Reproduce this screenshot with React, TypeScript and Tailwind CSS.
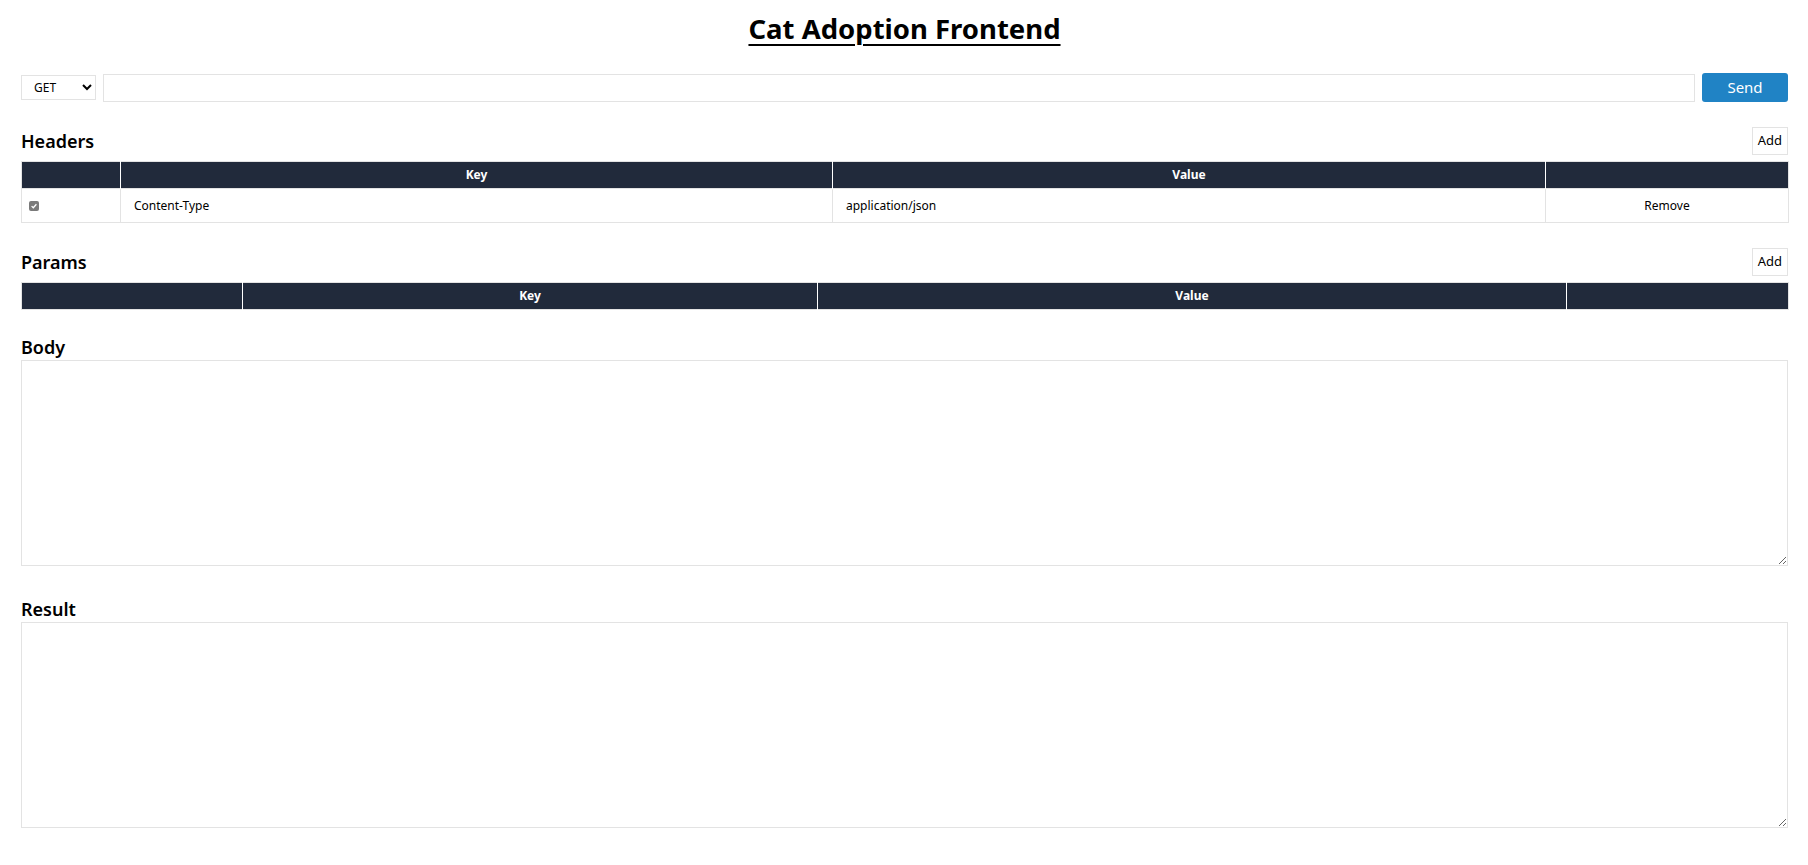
import { useState } from "react";

type Row = { enabled: boolean; key: string; value: string };

const font = "font-['Noto_Sans','Open_Sans',sans-serif]";

function CheckMark({ checked }: { checked: boolean }) {
   return (
      <span className={`inline-flex items-center justify-center w-[10px] h-[10px] rounded-[2px] align-middle ${checked ? "bg-[#7a7a7a]" : "border border-[#9a9a9a] bg-white"}`}>
         {checked && (
            <svg viewBox="0 0 10 10" className="w-[8px] h-[8px]">
               <path d="M2 5.2 L4.1 7.2 L8 2.8" fill="none" stroke="white" strokeWidth="1.6" />
            </svg>
         )}
      </span>
   );
}

function SectionHead({ title, onAdd }: { title: string; onAdd?: () => void }) {
   return (
      <div className="flex items-end justify-between">
         <h2 className="text-[18px] font-semibold leading-none text-black pb-[5px]">{title}</h2>
         {onAdd && (
            <button
               onClick={onAdd}
               className="h-[28px] px-[5px] border border-[#e3e3e3] bg-white text-[13px] text-black"
            >
               Add
            </button>
         )}
      </div>
   );
}

function KeyValueTable({ rows, widths }: { rows: Row[]; widths: string[] }) {
   return (
      <table className="w-full border-collapse table-fixed border border-[#e3e3e3] mt-[6px]">
         <colgroup>
            {widths.map((w, i) => (
               <col key={i} style={{ width: w }} />
            ))}
         </colgroup>
         <thead>
            <tr className="bg-[#212a3b] h-[27px] text-white text-[12px] font-bold">
               <th className="border-r border-white"></th>
               <th className="border-r border-white">Key</th>
               <th className="border-r border-white">Value</th>
               <th></th>
            </tr>
         </thead>
         <tbody>
            {rows.map(row => (
               <tr key={row.key} className="h-[34px] text-[12px] text-black">
                  <td className="border border-[#e3e3e3] px-[7px]">
                     <CheckMark checked={row.enabled} />
                  </td>
                  <td className="border border-[#e3e3e3] px-[13px]">{row.key}</td>
                  <td className="border border-[#e3e3e3] px-[13px]">{row.value}</td>
                  <td className="border border-[#e3e3e3] text-center">Remove</td>
               </tr>
            ))}
         </tbody>
      </table>
   );
}

export default function App() {
   const [method, setMethod] = useState("GET");
   const [headers] = useState<Row[]>([{ enabled: true, key: "Content-Type", value: "application/json" }]);

   return (
      <div className={`${font} bg-white min-h-screen pl-[21px] pr-[20px] text-black`}>
         <h1 className="text-center text-[27.5px] font-bold underline underline-offset-[5px] decoration-[2px] pt-[9px] leading-[40px]">
            Cat Adoption Frontend
         </h1>

         <div className="flex items-center mt-[24px] h-[29px]">
            <select
               value={method}
               onChange={e => setMethod(e.target.value)}
               className="h-[25px] w-[75px] border border-[#e3e3e3] bg-white text-[12px] pl-[8px]"
            >
               <option>GET</option>
               <option>POST</option>
               <option>PUT</option>
               <option>DELETE</option>
            </select>
            <input type="text" className="ml-[7px] flex-1 h-[28px] border border-[#e3e3e3] outline-none px-2 text-[13px]" />
            <button className="ml-[7px] w-[86px] h-[29px] rounded-[3px] bg-[#2083c5] text-white text-[15px]">Send</button>
         </div>

         <div className="mt-[25px]">
            <SectionHead title="Headers" onAdd={() => {}} />
            <KeyValueTable rows={headers} widths={["99px", "712px", "713px", "243px"]} />
         </div>

         <div className="mt-[25px]">
            <SectionHead title="Params" onAdd={() => {}} />
            <KeyValueTable rows={[]} widths={["221px", "575px", "749px", "222px"]} />
         </div>

         <div className="mt-[24px]">
            <h2 className="text-[18px] font-semibold leading-[26px]">Body</h2>
            <textarea className="block w-full h-[206px] border border-[#e3e3e3] outline-none p-2 text-[13px]" />
         </div>

         <div className="mt-[30px]">
            <h2 className="text-[18px] font-semibold leading-[26px]">Result</h2>
            <textarea readOnly className="block w-full h-[206px] border border-[#e3e3e3] outline-none p-2 text-[13px]" />
         </div>
      </div>
   );
}
